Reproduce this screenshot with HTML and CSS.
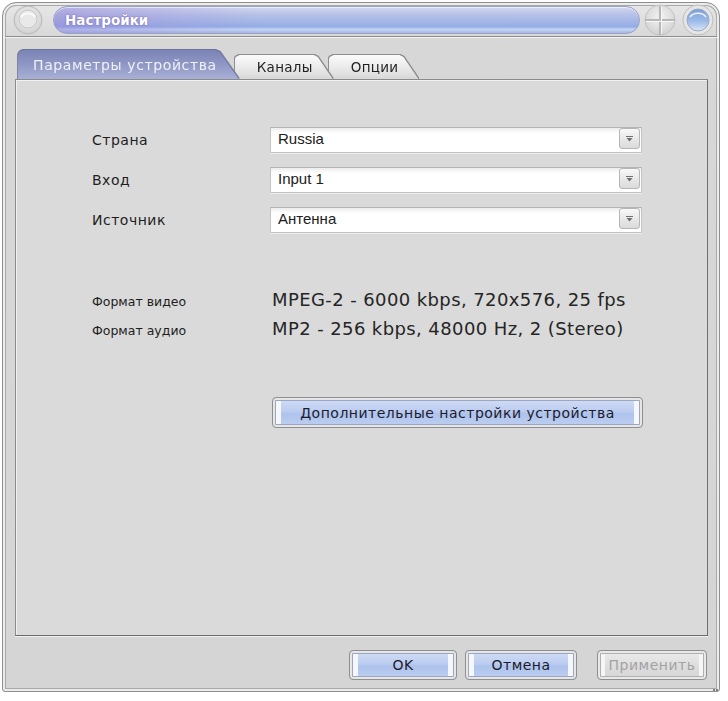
FILE: index.html
```html
<!DOCTYPE html>
<html lang="ru">
<head>
<meta charset="utf-8">
<title>Настройки</title>
<link rel="stylesheet" href="styles.css">
</head>
<body>
<div class="window">
  <div class="titlebar">
    <span class="orb orb-menu">
      <svg width="30" height="30" viewBox="0 0 30 30">
        <defs>
          <radialGradient id="gm" cx="50%" cy="40%" r="60%">
            <stop offset="0" stop-color="#f7f7f7"/>
            <stop offset="1" stop-color="#cfcfcf"/>
          </radialGradient>
        </defs>
        <circle cx="15" cy="15" r="14" fill="url(#gm)" stroke="#b9b9b9"/>
        <circle cx="15" cy="14" r="9" fill="#e9e9e9" stroke="#c6c6c6"/>
        <path d="M8 12 A8 7 0 0 1 22 12" fill="none" stroke="#fafafa" stroke-width="2"/>
      </svg>
    </span>
    <div class="title-pill"><span class="title">Настройки</span></div>
    <span class="orb orb-max">
      <svg width="36" height="32" viewBox="0 0 36 32">
        <defs>
          <radialGradient id="gx" cx="50%" cy="40%" r="60%">
            <stop offset="0" stop-color="#f4f4f4"/>
            <stop offset="1" stop-color="#d2d2d2"/>
          </radialGradient>
        </defs>
        <circle cx="18" cy="16" r="15" fill="url(#gx)" stroke="#c2c2c2"/>
        <path d="M18 2 V31 M3 16 H33" stroke="#b8b8b8" stroke-width="2.2"/>
        <path d="M19.5 3 V30 M4 17.5 H32" stroke="#f6f6f6" stroke-width="1"/>
      </svg>
    </span>
    <span class="orb orb-min">
      <svg width="36" height="32" viewBox="0 0 36 32">
        <defs>
          <linearGradient id="gb" x1="0" y1="0" x2="0" y2="1">
            <stop offset="0" stop-color="#7a9fd9"/>
            <stop offset="0.55" stop-color="#9dbbe8"/>
            <stop offset="1" stop-color="#dbe6f6"/>
          </linearGradient>
        </defs>
        <circle cx="18" cy="16" r="15" fill="#e6e6e6" stroke="#bdbdbd"/>
        <circle cx="18" cy="16" r="11" fill="url(#gb)" stroke="#9aa9c4"/>
        <path d="M10 13 A9 7 0 0 1 26 13" fill="none" stroke="#eef3fb" stroke-width="1.5"/>
      </svg>
    </span>
  </div>

  <div class="content">
    <div class="tabs">
      <div class="tab tab-active"><span class="tab-face">Параметры устройства</span></div>
      <div class="tab tab-second"><span class="tab-face">Каналы</span></div>
      <div class="tab tab-third"><span class="tab-face">Опции</span></div>
    </div>

    <div class="panel">
      <div class="form">
        <span class="label">Страна</span>
        <div class="combo"><span class="combo-text">Russia</span><span class="drop"><svg width="9" height="6" viewBox="0 0 9 6"><path d="M1 0.5 H8" stroke="#6f6f6f" stroke-width="1"/><path d="M1.5 2 H7.5 L4.5 5.5 Z" fill="#6f6f6f"/></svg></span></div>
        <span class="label">Вход</span>
        <div class="combo"><span class="combo-text">Input 1</span><span class="drop"><svg width="9" height="6" viewBox="0 0 9 6"><path d="M1 0.5 H8" stroke="#6f6f6f" stroke-width="1"/><path d="M1.5 2 H7.5 L4.5 5.5 Z" fill="#6f6f6f"/></svg></span></div>
        <span class="label">Источник</span>
        <div class="combo"><span class="combo-text">Антенна</span><span class="drop"><svg width="9" height="6" viewBox="0 0 9 6"><path d="M1 0.5 H8" stroke="#6f6f6f" stroke-width="1"/><path d="M1.5 2 H7.5 L4.5 5.5 Z" fill="#6f6f6f"/></svg></span></div>
      </div>

      <div class="info">
        <div class="info-row"><span class="info-label">Формат видео</span><span class="info-value">MPEG-2 - 6000 kbps, 720x576, 25 fps</span></div>
        <div class="info-row"><span class="info-label">Формат аудио</span><span class="info-value">MP2 - 256 kbps, 48000 Hz, 2 (Stereo)</span></div>
      </div>

      <button class="btn btn-wide" type="button">Дополнительные настройки устройства</button>
    </div>

    <div class="footer">
      <button class="btn btn-ok" type="button">OK</button>
      <button class="btn btn-cancel" type="button">Отмена</button>
      <button class="btn btn-apply" type="button" disabled>Применить</button>
    </div>
  </div>

  <span class="grip">
    <svg width="24" height="12" viewBox="0 0 24 12">
      <g fill="#7e7e7e">
        <rect x="18" y="1" width="2" height="2"/><rect x="21" y="1" width="2" height="2"/>
        <rect x="12" y="4" width="2" height="2"/><rect x="15" y="4" width="2" height="2"/><rect x="18" y="4" width="2" height="2"/><rect x="21" y="4" width="2" height="2"/>
        <rect x="6" y="7" width="2" height="2"/><rect x="9" y="7" width="2" height="2"/><rect x="12" y="7" width="2" height="2"/><rect x="15" y="7" width="2" height="2"/><rect x="18" y="7" width="2" height="2"/><rect x="21" y="7" width="2" height="2"/>
      </g>
    </svg>
  </span>
</div>
</body>
</html>
```

FILE: styles.css
```css
* { box-sizing: border-box; }

html, body {
  margin: 0;
  padding: 0;
  background: #ffffff;
}

body {
  font-family: "DejaVu Sans", "Liberation Sans", sans-serif;
  color: #1f1f1f;
}

.window {
  position: relative;
  margin: 2px 0 0 2px;
  width: 718px;
  height: 690px;
  border: 1px solid #8f8f8f;
  border-radius: 14px 14px 3px 3px;
  background: linear-gradient(#e7e7e7, #d7d7d7 36px, #d5d5d5);
  box-shadow: inset 0 0 0 2px #ececec, inset 0 0 0 3px #a9a9a9;
  display: flex;
  flex-direction: column;
}

/* ---------- title bar ---------- */
.titlebar {
  height: 34px;
  margin: 0 2px;
  padding: 0 1px 0 8px;
  display: flex;
  align-items: center;
  border-bottom: 1px solid #8c8c8c;
  box-shadow: 0 1px 0 #f2f2f2;
}

.orb { display: block; line-height: 0; }
.orb-menu { margin-right: 10px; }
.orb-max { margin-left: 2px; }
.orb-min { margin-left: 2px; }

.title-pill {
  flex: 1;
  height: 28px;
  border-radius: 14px;
  border: 1px solid #98a2c8;
  background:
    linear-gradient(to right, rgba(150, 128, 212, 0.45) 0, rgba(150, 128, 212, 0) 35%),
    linear-gradient(#d3d8ee 0, #b6c1e7 30%, #a2b5e6 58%, #94ade6 76%, #c3d5f4 86%, #a6b8e2 100%);
  box-shadow: inset 0 1px 0 rgba(255, 255, 255, 0.6);
  display: flex;
  align-items: center;
  padding-left: 11px;
}

.title {
  color: #ffffff;
  font-weight: bold;
  font-size: 13.5px;
  text-shadow: 0 0 2px #7a6cb8, 0 0 1px #7a6cb8;
}

/* ---------- content ---------- */
.content {
  flex: 1;
  padding: 13px 11px 0 12px;
  display: flex;
  flex-direction: column;
}

.tabs {
  display: flex;
  align-items: flex-end;
  padding-left: 3px;
  height: 29px;
}

.tab {
  position: relative;
  filter: drop-shadow(0 -1px 0 #8e8e8e) drop-shadow(1px 0 0 #8e8e8e) drop-shadow(-1px 0 0 #8e8e8e);
}

.tab + .tab { margin-left: -4px; }

.tab-face {
  display: flex;
  align-items: center;
  height: 24px;
  padding: 0 20px 0 22px;
  font-size: 13.5px;
  letter-spacing: 0.3px;
  color: #1f1f1f;
  background: linear-gradient(#fbfbfb, #e9e9e9 55%, #d8d8d8);
  clip-path: polygon(0 5px, 1px 2px, 3px 1px, 5px 0, calc(100% - 19px) 0, calc(100% - 15px) 2px, 100% 100%, 0 100%);
}

.tab-active { z-index: 3; filter: drop-shadow(0 -1px 0 #6c7399) drop-shadow(1px 0 0 #7d84a8) drop-shadow(-1px 0 0 #7d84a8); }
.tab-second { z-index: 2; }
.tab-third { z-index: 1; }

.tab-active .tab-face {
  height: 29px;
  padding: 0 22px 0 15px;
  font-size: 14px;
  letter-spacing: 0.6px;
  color: #eef0fa;
  background: linear-gradient(#7b84b6, #8f97c4 50%, #a9b0d6);
  clip-path: polygon(0 6px, 1px 3px, 3px 1px, 6px 0, calc(100% - 24px) 0, calc(100% - 19px) 2px, 100% 100%, 0 100%);
}

.panel {
  height: 557px;
  background: #dadada;
  border: 1px solid #8b8b8b;
  border-right-color: #707070;
  border-bottom-color: #6a6a6a;
  box-shadow: inset 1px 1px 0 #f1f1f1, 0 1px 0 #f0f0f0;
  padding: 47px 0 0 76px;
}

.form {
  display: grid;
  grid-template-columns: 178px 372px;
  grid-auto-rows: 26px;
  row-gap: 14px;
  align-items: center;
}

.label {
  font-size: 14px;
  letter-spacing: 0.5px;
  color: #1e1e1e;
}

.combo {
  height: 26px;
  display: flex;
  align-items: flex-start;
  border: 1px solid #c3c3c3;
  border-top-color: #b4b4b4;
  background: linear-gradient(#ececec, #ffffff 5px, #ffffff);
  box-shadow: 0 1px 0 #ededed;
  padding-left: 7px;
}

.combo-text {
  font-family: "Liberation Sans", Arial, sans-serif;
  font-size: 15px;
  color: #202020;
  line-height: 20px;
  padding-top: 1px;
}

.drop {
  margin-left: auto;
  margin-right: 1px;
  width: 21px;
  height: 21px;
  border: 1px solid #b6b6b6;
  border-radius: 3px;
  background: linear-gradient(#f8f8f8, #dadada);
  display: flex;
  align-items: center;
  justify-content: center;
}

.info {
  margin-top: 54px;
}

.info-row {
  height: 29px;
  display: flex;
  align-items: baseline;
  padding-top: 2px;
}

.info-label {
  width: 180px;
  font-size: 12.5px;
  color: #1e1e1e;
}

.info-value {
  font-size: 18px;
  letter-spacing: 0.4px;
  color: #252525;
}

/* ---------- buttons ---------- */
.btn {
  font-family: "DejaVu Sans", sans-serif;
  font-size: 14px;
  letter-spacing: 0.5px;
  color: #1c1c2e;
  height: 30px;
  padding: 0;
  border: 1px solid #8f8f8f;
  border-radius: 4px;
  background: linear-gradient(#d4def6, #bccdf0 45%, #aec3ec 55%, #bed0f2);
  box-shadow:
    inset 0 0 0 2px #e6e6e6,
    inset 0 0 0 3px #9ba7c2,
    inset 8px 0 0 #f5f7fb,
    inset -8px 0 0 #f5f7fb;
  cursor: default;
}

.btn-wide {
  display: block;
  margin: 52px 0 0 180px;
  width: 371px;
  height: 31px;
}

.footer {
  display: flex;
  justify-content: flex-end;
  padding: 14px 1px 0 0;
}

.btn-ok { width: 108px; }
.btn-cancel { width: 112px; margin-left: 8px; }
.btn-apply {
  width: 110px;
  margin-left: 20px;
  color: #a3a3a3;
  background: linear-gradient(#ececec, #dedede 50%, #d6d6d6);
  box-shadow:
    inset 0 0 0 2px #e9e9e9,
    inset 0 0 0 3px #b0b0b0,
    inset 7px 0 0 #f6f6f6,
    inset -7px 0 0 #f6f6f6;
}

.grip {
  position: absolute;
  right: 0;
  bottom: -9px;
  line-height: 0;
  z-index: 5;
}
```
